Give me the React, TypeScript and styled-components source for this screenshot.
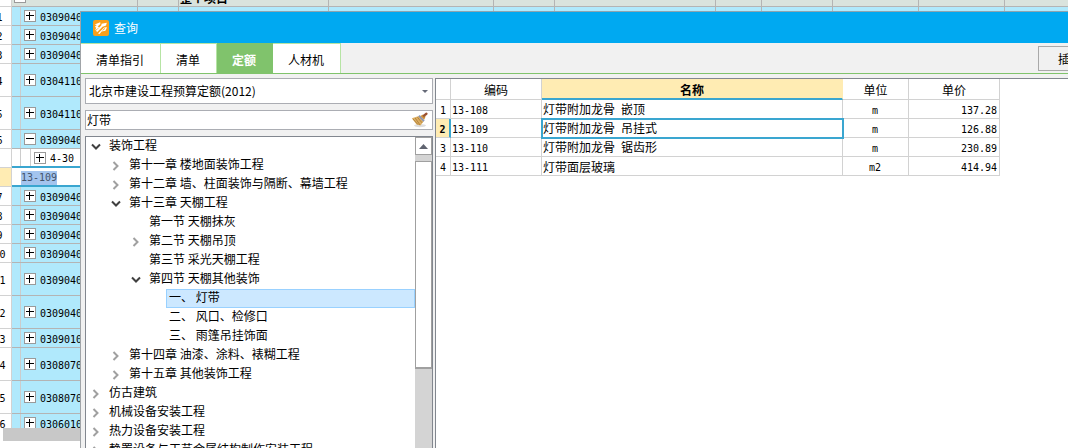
import React from 'react';
import styled, { createGlobalStyle, css } from 'styled-components';

const GlobalStyle = createGlobalStyle`
  * { box-sizing: border-box; }
  html, body, #root { height: 100%; }
  body {
    margin: 0;
    overflow: hidden;
    background: #fff;
    color: #000;
    font-family: "Noto Sans CJK SC", sans-serif;
    font-size: 12px;
    line-height: 18px;
  }
  button, input, select { font: inherit; color: inherit; }
`;

const line = '#b4b4b4';
const gridLine = '#d2d2d2';
const accent = '#3aa6d0';
const highlight = '#ffecb3';
const frame = '#82878f';

const Screen = styled.div`
  position: relative;
  height: 100vh;
  overflow: hidden;
`;

/* Latin runs use a monospaced face, half as wide as a Chinese character */
const Latin = styled.span<{ $bold?: boolean }>`
  font-family: "DejaVu Sans Mono", monospace;
  font-size: 10px;
  font-weight: ${(p) => (p.$bold ? 700 : 400)};
  white-space: pre;
`;

function Mixed({ children, bold }: { children: string; bold?: boolean }) {
  return (
    <>
      {children.split(/([\x20-\x7e]+)/).filter(Boolean).map((part, i) =>
        /^[\x20-\x7e]/.test(part) ? <Latin key={i} $bold={bold}>{part}</Latin> : part,
      )}
    </>
  );
}

/* ---------- project sheet behind the dialog ---------- */

const Sheet = styled.div`
  height: 440px;
  margin: -12px 0 0 -12px;
  overflow: hidden;
`;

const SheetTable = styled.table`
  width: 1200px;
  table-layout: fixed;
  border-collapse: separate;
  border-spacing: 0;
`;

type RowKind = 'total' | 'item' | 'sub' | 'editing';
const rowFill: Record<RowKind, string> = { total: '#dae3dd', item: '#b0e9fc', sub: '#fff', editing: '#fff' };

const SheetRow = styled.tr<{ $tall?: boolean; $kind: RowKind }>`
  height: ${(p) => (p.$tall ? 33 : 19)}px;
  td {
    background-color: ${(p) => rowFill[p.$kind]};
    border-bottom: ${(p) => (p.$kind === 'sub' || p.$kind === 'editing' ? `2px solid ${accent}` : `1px solid ${line}`)};
  }
`;

const SheetNumber = styled.th<{ $on: boolean }>`
  padding: 1px 0 0;
  text-align: center;
  font-weight: 400;
  line-height: 12px;
  border-right: 1px solid ${gridLine};
  border-bottom: 1px solid ${gridLine};
  background: ${(p) => (p.$on ? highlight : '#fff')};
`;

const SheetCell = styled.td`
  padding: 0 0 0 1px;
  line-height: 12px;
  border-right: 1px solid ${line};
  white-space: nowrap;
`;

const GroupName = styled.b`
  display: block;
  padding-top: 2px;
`;

const CodeCell = styled.div<{ $level: number }>`
  display: flex;
  align-items: center;
  gap: 4px;
  height: 12px;
  padding-left: ${(p) => (p.$level === 0 ? 1 : p.$level === 1 ? 11 : 21)}px;
`;

const CodeText = styled.span`
  padding-top: 1px;
`;

/* Guide lines of the outline run down behind the expanders */
const OutlineCell = styled(SheetCell)<{ $level: number }>`
  ${(p) => p.$level > 0 && css`
    background-image: linear-gradient(#ccc, #ccc)${p.$level === 2 ? ', linear-gradient(#ccc, #ccc)' : ''};
    background-repeat: no-repeat;
    background-size: 1px 100%;
    background-position: 8px 0, 18px 0;
  `}
`;

const Expander = styled.button`
  display: grid;
  place-items: center;
  width: 12px;
  height: 12px;
  padding: 0;
  border: 1px solid #9a9a9a;
  background: #fff;
`;

const Editing = styled.mark`
  display: flex;
  align-items: center;
  width: 36px;
  height: 14px;
  margin: 3px 0 0 8px;
  color: #44546c;
  background: #a3c4ee;
`;

function ToggleBox({ open }: { open?: boolean }) {
  return (
    <Expander aria-label={open ? '折叠' : '展开'}>
      <svg width="8" height="8" viewBox="0 0 8 8" shapeRendering="crispEdges">
        <path d={open ? 'M0 3.5H8' : 'M0 3.5H8M3.5 0V8'} stroke="#000" fill="none" />
      </svg>
    </Expander>
  );
}

const sheetRows: { n: string; code: string; kind: RowKind; tall?: boolean; open?: boolean }[] = [
  { n: '', code: '', kind: 'total', open: true },
  { n: '1', code: '0309040', kind: 'item' },
  { n: '2', code: '0309040', kind: 'item' },
  { n: '3', code: '0309040', kind: 'item' },
  { n: '4', code: '0304110', kind: 'item', tall: true },
  { n: '5', code: '0304110', kind: 'item', tall: true },
  { n: '6', code: '0309040', kind: 'item', open: true },
  { n: '', code: '4-30', kind: 'sub' },
  { n: '', code: '13-109', kind: 'editing' },
  { n: '7', code: '0309040', kind: 'item' },
  { n: '8', code: '0309040', kind: 'item' },
  { n: '9', code: '0309040', kind: 'item' },
  { n: '10', code: '0309040', kind: 'item' },
  { n: '11', code: '0309040', kind: 'item', tall: true },
  { n: '12', code: '0309040', kind: 'item', tall: true },
  { n: '13', code: '0309010', kind: 'item' },
  { n: '14', code: '0308070', kind: 'item', tall: true },
  { n: '15', code: '0308070', kind: 'item', tall: true },
  { n: '16', code: '0306010', kind: 'item' },
];

const outlineLevel: Record<RowKind, number> = { total: 0, item: 1, sub: 2, editing: 0 };

const sheetColumns = [24, 126, 41, 150, 165, 61, 161, 46, 71, 86, 86, 183];

const SheetScroll = styled.div`
  height: 13px;
  margin-left: 3px;
  background: #c8c8c8;
`;

function ProjectSheet() {
  return (
    <>
      <Sheet>
        <SheetTable>
          <colgroup>{sheetColumns.map((w, i) => <col key={i} style={{ width: w }} />)}</colgroup>
          <tbody>
            {sheetRows.map((r, i) => (
              <SheetRow key={i} $kind={r.kind} $tall={r.tall}>
                <SheetNumber $on={r.kind === 'editing'}><Mixed>{r.n}</Mixed></SheetNumber>
                <OutlineCell $level={outlineLevel[r.kind]}>
                  {r.kind === 'editing' ? (
                    <Editing><Mixed>{r.code}</Mixed></Editing>
                  ) : (
                    <CodeCell $level={outlineLevel[r.kind]}>
                      <ToggleBox open={r.open} />
                      <CodeText><Mixed>{r.code}</Mixed></CodeText>
                    </CodeCell>
                  )}
                </OutlineCell>
                {sheetColumns.slice(2).map((_, c) => (
                  <SheetCell key={c}>{r.kind === 'total' && c === 1 ? <GroupName>整个项目</GroupName> : null}</SheetCell>
                ))}
              </SheetRow>
            ))}
          </tbody>
        </SheetTable>
      </Sheet>
      <SheetScroll />
    </>
  );
}

/* ---------- query dialog ---------- */

/* The dialog hangs over the sheet and runs past the right edge of the window */
const Dialog = styled.section`
  position: absolute;
  top: 11px;
  left: 80px;
  right: -40px;
  bottom: -40px;
  display: flex;
  flex-direction: column;
  border-top: 1px solid #8fa3ae;
  border-left: 1px solid #a0a4a8;
  background: #f1f1f1;
`;

const TitleBar = styled.header`
  display: flex;
  flex: none;
  align-items: center;
  gap: 5px;
  height: 31px;
  padding-left: 12px;
  color: #fff;
  background: #00a9f1;
`;

const Title = styled.h1`
  margin: 0;
  font-size: 12px;
  font-weight: 400;
`;

const TabBar = styled.nav`
  display: flex;
  flex: none;
  align-items: stretch;
  height: 31px;
  border-bottom: 1px solid #80c36c;
`;

const Tab = styled.button<{ $active?: boolean }>`
  padding: 2px 16px 0 15px;
  border: 0;
  border-top: 1px solid #b6e4a4;
  border-right: 1px solid #b6e4a4;
  background: #fff;
  ${(p) => p.$active && css`
    color: #fff;
    font-weight: 700;
    border-color: #80c36c;
    background: #80c36c;
  `}
`;

const InsertButton = styled.button`
  width: 60px;
  height: 25px;
  margin: 3px 10px 0 auto;
  padding: 0 0 0 19px;
  text-align: left;
  border: 1px solid #a9a9a9;
  background: #f1f1f1;
`;

const Body = styled.div`
  display: flex;
  flex: 1;
  gap: 2px;
  min-height: 0;
  padding: 4px 0 0 4px;
`;

const Side = styled.div`
  display: flex;
  flex: none;
  flex-direction: column;
  gap: 6px;
  width: 348px;
`;

const Combo = styled.div`
  position: relative;
  flex: none;
  height: 26px;
  svg {
    position: absolute;
    right: 5px;
    top: 12px;
    pointer-events: none;
  }
`;

const ComboSelect = styled.select`
  width: 100%;
  height: 100%;
  padding: 0 20px 0 3px;
  appearance: none;
  border: 1px solid #abadb3;
  border-radius: 0;
  background: #fff;
`;

const SearchBox = styled.div`
  display: flex;
  flex: none;
  align-items: center;
  height: 20px;
  padding-right: 3px;
  border: 1px solid #abadb3;
  background: #fff;
`;

const SearchInput = styled.input`
  flex: 1;
  min-width: 0;
  padding: 0 0 0 1px;
  border: 0;
  outline: 0;
  background: transparent;
`;

const ClearButton = styled.button`
  display: flex;
  padding: 0;
  border: 0;
  background: none;
`;

const TreePanel = styled.div`
  display: flex;
  flex: 1;
  min-height: 0;
  overflow: hidden;
  border: 1px solid ${frame};
  background: #fff;
`;

const Tree = styled.ul`
  flex: 1;
  min-width: 0;
  margin: 0;
  padding: 0;
  list-style: none;
`;

const TreeItem = styled.li<{ $level: number }>`
  display: flex;
  align-items: center;
  height: 19px;
  padding-left: ${(p) => 4 + p.$level * 20}px;
`;

const Arrow = styled.svg`
  flex: none;
  width: 12px;
  height: 12px;
  margin-right: 4px;
`;

const TreeLabel = styled.span<{ $selected?: boolean }>`
  flex: 1;
  height: 19px;
  padding-left: 2px;
  white-space: pre;
  border: 1px solid ${(p) => (p.$selected ? '#99d1ff' : 'transparent')};
  line-height: 14px;
  background: ${(p) => (p.$selected ? '#cce8ff' : 'transparent')};
`;

const ScrollTrack = styled.div`
  flex: none;
  width: 17px;
  background: #d4d4d4;
`;

const ScrollUp = styled.button`
  display: grid;
  place-items: center;
  width: 17px;
  height: 18px;
  padding: 0;
  border: 1px solid #a0a0a0;
  background: #fff;
`;

const ScrollThumb = styled.div`
  height: 208px;
  margin-top: 6px;
  border: 1px solid #a0a0a0;
  border-bottom-width: 2px;
  background: #fff;
`;

const treeRows: { label: string; level: number; state?: 'open' | 'closed'; selected?: boolean }[] = [
  { label: '装饰工程', level: 0, state: 'open' },
  { label: '第十一章 楼地面装饰工程', level: 1, state: 'closed' },
  { label: '第十二章 墙、柱面装饰与隔断、幕墙工程', level: 1, state: 'closed' },
  { label: '第十三章 天棚工程', level: 1, state: 'open' },
  { label: '第一节 天棚抹灰', level: 2 },
  { label: '第二节 天棚吊顶', level: 2, state: 'closed' },
  { label: '第三节 采光天棚工程', level: 2 },
  { label: '第四节 天棚其他装饰', level: 2, state: 'open' },
  { label: '一、 灯带', level: 3, selected: true },
  { label: '二、 风口、检修口', level: 3 },
  { label: '三、 雨篷吊挂饰面', level: 3 },
  { label: '第十四章 油漆、涂料、裱糊工程', level: 1, state: 'closed' },
  { label: '第十五章 其他装饰工程', level: 1, state: 'closed' },
  { label: '仿古建筑', level: 0, state: 'closed' },
  { label: '机械设备安装工程', level: 0, state: 'closed' },
  { label: '热力设备安装工程', level: 0, state: 'closed' },
  { label: '静置设备与工艺金属结构制作安装工程', level: 0, state: 'closed' },
];

const ResultPanel = styled.div`
  flex: 1;
  min-width: 0;
  border-top: 1px solid ${frame};
  border-left: 1px solid ${frame};
  background: #fff;
`;

const ResultTable = styled.table`
  width: 564px;
  table-layout: fixed;
  border-collapse: separate;
  border-spacing: 0;
`;

const HeadCell = styled.th<{ $active?: boolean }>`
  height: 21px;
  padding: 2px 0 0;
  line-height: 16px;
  font-weight: ${(p) => (p.$active ? 700 : 400)};
  border-right: 1px solid ${gridLine};
  border-bottom: 1px solid ${gridLine};
  ${(p) => p.$active && css`
    border-right-color: ${highlight};
    border-bottom: 2px solid ${accent};
    background: ${highlight};
  `}
`;

const RowHead = styled.th<{ $active: boolean }>`
  height: 19px;
  padding: 1px 0 0;
  line-height: 14px;
  font-weight: 400;
  border-right: 1px solid ${gridLine};
  border-bottom: 1px solid ${gridLine};
  ${(p) => p.$active && css`
    border-right: 2px solid ${accent};
    background: ${highlight};
  `}
`;

const Cell = styled.td<{ $align?: 'left' | 'center' | 'right'; $active?: boolean }>`
  height: 19px;
  padding: 1px 2px 0 1px;
  line-height: 14px;
  text-align: ${(p) => p.$align ?? 'left'};
  white-space: nowrap;
  border-right: 1px solid ${gridLine};
  border-bottom: 1px solid ${gridLine};
  ${(p) => p.$active && css`
    outline: 2px solid ${accent};
    outline-offset: -1px;
  `}
`;

const results = [
  ['13-108', '灯带附加龙骨 嵌顶', 'm', '137.28'],
  ['13-109', '灯带附加龙骨 吊挂式', 'm', '126.88'],
  ['13-110', '灯带附加龙骨 锯齿形', 'm', '230.89'],
  ['13-111', '灯带面层玻璃', 'm2', '414.94'],
];

function Logo() {
  return (
    <svg width="16" height="16" viewBox="0 0 16 16" aria-hidden="true">
      <rect width="16" height="16" rx="2" fill="#f9a01b" />
      <path d="M1.6 4.4 7.2 2.2 7.4 4 4.6 6.4 6.2 7.2 2 10.6 3.2 7.8 1.8 6.8 3.8 4.9z" fill="#fff" />
      <path d="M3.6 11.4 10.4 4.6" fill="none" stroke="#fff" strokeWidth="1.8" />
      <path d="M8.6 3.8 13.8 2.8 13 5.6 10.4 6.6 8.4 5.6z" fill="#fff" />
      <path d="M5 13.4 11.2 7.4 14 7.2 12.4 10.8 8.6 11.4 6.6 14z" fill="#fff" />
      <path d="M9.6 10.4 12 8.4" stroke="#f9a01b" strokeWidth="0.9" />
    </svg>
  );
}

function Broom() {
  return (
    <svg width="18" height="16" viewBox="0 0 18 16" aria-hidden="true">
      <ellipse cx="9" cy="13.6" rx="6" ry="1.6" fill="#dedede" />
      <path d="M0.8 6.2 8 4 12.6 9.4 9.4 13.6 5.6 12.6z" fill="#dcae62" />
      <path d="M2 7 7 12.6M4.2 6 9 13M6.4 5.2 11 10.8" stroke="#a97a33" strokeWidth="0.8" />
      <path d="M8 3.6 13 9.2" stroke="#8b95b5" strokeWidth="1.8" />
      <path d="M9.4 4 12 2.6 14.6 4.4 13.2 7.8z" fill="#c98d3a" />
      <path d="M13 3.6 15.4 1.8" stroke="#9c5230" strokeWidth="2.4" strokeLinecap="round" />
    </svg>
  );
}

function TreeArrow({ state }: { state?: 'open' | 'closed' }) {
  return (
    <Arrow viewBox="0 0 12 12" aria-hidden="true">
      {state === 'open' && <path d="M2 3.5 6 7.5 10 3.5" fill="none" stroke="#404040" strokeWidth="2" />}
      {state === 'closed' && <path d="M3.5 2 7.5 6 3.5 10" fill="none" stroke="#a0a0a0" strokeWidth="2" />}
    </Arrow>
  );
}

export default function App() {
  return (
    <Screen>
      <GlobalStyle />
      <ProjectSheet />
      <Dialog aria-label="查询">
        <TitleBar>
          <Logo />
          <Title>查询</Title>
        </TitleBar>
        <TabBar>
          <Tab>清单指引</Tab>
          <Tab>清单</Tab>
          <Tab $active>定额</Tab>
          <Tab>人材机</Tab>
          <InsertButton>插入</InsertButton>
        </TabBar>
        <Body>
          <Side>
            <Combo>
              <ComboSelect aria-label="定额库">
                <option>北京市建设工程预算定额(2012)</option>
              </ComboSelect>
              <svg width="6" height="4" viewBox="0 0 6 4"><path d="M0 0H6L3 3z" fill="#666a78" /></svg>
            </Combo>
            <SearchBox>
              <SearchInput aria-label="搜索" defaultValue="灯带" />
              <ClearButton aria-label="清除"><Broom /></ClearButton>
            </SearchBox>
            <TreePanel>
              <Tree>
                {treeRows.map((r) => (
                  <TreeItem key={r.label} $level={r.level}>
                    <TreeArrow state={r.state} />
                    <TreeLabel $selected={r.selected}>{r.label}</TreeLabel>
                  </TreeItem>
                ))}
              </Tree>
              <ScrollTrack>
                <ScrollUp aria-label="向上滚动">
                  <svg width="9" height="5" viewBox="0 0 9 5"><path d="M0 5 4.5 0 9 5z" fill="#606470" /></svg>
                </ScrollUp>
                <ScrollThumb />
              </ScrollTrack>
            </TreePanel>
          </Side>
          <ResultPanel>
            <ResultTable>
              <colgroup>
                <col style={{ width: 15 }} />
                <col style={{ width: 91 }} />
                <col style={{ width: 301 }} />
                <col style={{ width: 66 }} />
                <col style={{ width: 91 }} />
              </colgroup>
              <thead>
                <tr>
                  <HeadCell aria-label="序号" />
                  <HeadCell>编码</HeadCell>
                  <HeadCell $active>名称</HeadCell>
                  <HeadCell>单位</HeadCell>
                  <HeadCell>单价</HeadCell>
                </tr>
              </thead>
              <tbody>
                {results.map(([code, name, unit, price], i) => (
                  <tr key={code}>
                    <RowHead $active={i === 1}><Mixed bold={i === 1}>{String(i + 1)}</Mixed></RowHead>
                    <Cell><Mixed>{code}</Mixed></Cell>
                    <Cell $active={i === 1}><Mixed>{name}</Mixed></Cell>
                    <Cell $align="center"><Mixed>{unit}</Mixed></Cell>
                    <Cell $align="right"><Mixed>{price}</Mixed></Cell>
                  </tr>
                ))}
              </tbody>
            </ResultTable>
          </ResultPanel>
        </Body>
      </Dialog>
    </Screen>
  );
}
